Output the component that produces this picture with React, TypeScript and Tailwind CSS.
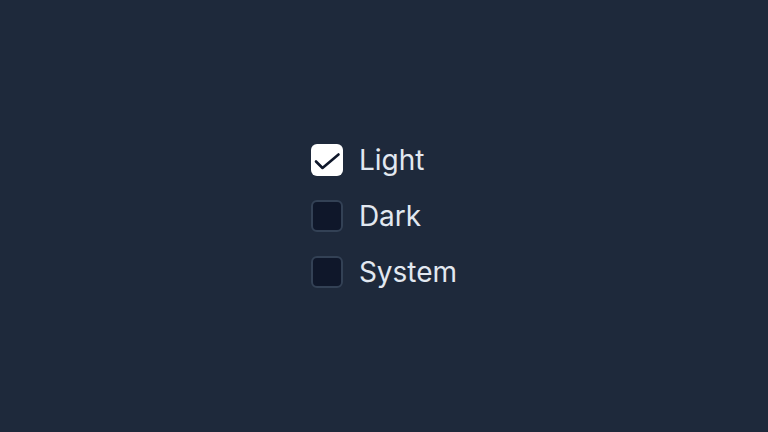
import React, { useState } from "react";

const options = ["Light", "Dark", "System"];

export default function App() {
  const [checked, setChecked] = useState<Record<string, boolean>>({ Light: true, Dark: false, System: false });
  return (
    <div className="w-[768px] h-[432px] bg-[#1e293b] flex items-center justify-center" style={{ fontFamily: "Inter, 'Noto Sans', sans-serif" }}>
      <div className="flex flex-col gap-6">
        {options.map((o) => (
          <label key={o} className="flex items-center gap-4 cursor-pointer" onClick={() => setChecked({ ...checked, [o]: !checked[o] })}>
            {checked[o] ? (
              <span className="w-8 h-8 rounded-md bg-white block">
                <svg width="32" height="32" viewBox="0 0 32 32" fill="none" stroke="#0f172a" strokeWidth="2.6" strokeLinecap="round" strokeLinejoin="round">
                  <path d="M5 17.5l6.5 6.5L27.5 10.5" />
                </svg>
              </span>
            ) : (
              <span className="w-8 h-8 rounded-md bg-[#0f172a] border-2 border-[#334155]" />
            )}
            <span className="text-[28px] leading-8 text-[#e2e8f0]">{o}</span>
          </label>
        ))}
      </div>
    </div>
  );
}
